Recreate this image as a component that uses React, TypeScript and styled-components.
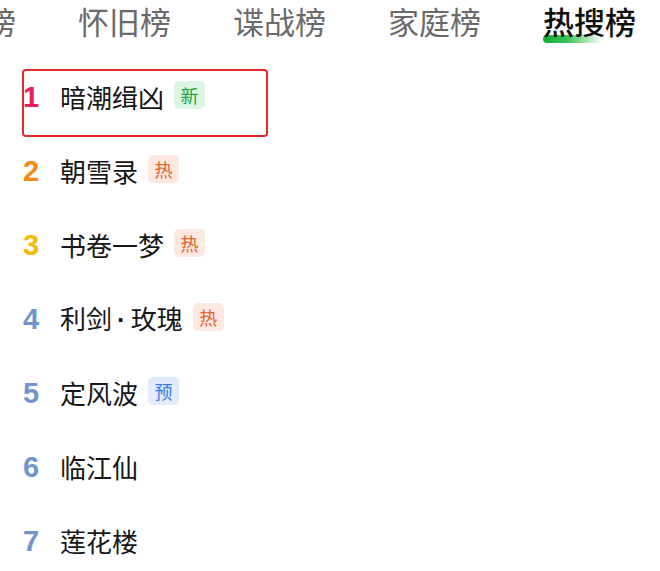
import React from 'react';
import styled, { createGlobalStyle } from 'styled-components';

const GlobalStyle = createGlobalStyle`
    html, body {
        margin: 0;
        padding: 0;
        background: #ffffff;
        overflow: hidden;
    }
    body {
        font-family: 'Noto Sans CJK SC', 'Noto Sans', sans-serif;
    }
`;

type TagKind = 'new' | 'hot' | 'pre';

const tagColors: Record<TagKind, { bg: string; fg: string; text: string }> = {
    new: { bg: '#dcf5e2', fg: '#18a64a', text: '新' },
    hot: { bg: '#fde8e1', fg: '#e2612c', text: '热' },
    pre: { bg: '#e1ebfb', fg: '#3b7be2', text: '预' },
};

const rankColors = ['#f0195b', '#f28a17', '#f7b705'];

// a name may hold a middle dot, drawn narrow as in the app
const shows: { name: string[]; tag?: TagKind }[] = [
    { name: ['暗潮缉凶'], tag: 'new' },
    { name: ['朝雪录'], tag: 'hot' },
    { name: ['书卷一梦'], tag: 'hot' },
    { name: ['利剑', '玫瑰'], tag: 'hot' },
    { name: ['定风波'], tag: 'pre' },
    { name: ['临江仙'] },
    { name: ['莲花楼'] },
];

const tabs = ['热播榜', '怀旧榜', '谍战榜', '家庭榜', '热搜榜'];

const Page = styled.div`
    width: 660px;
    height: 571px;
    overflow: hidden;
    background: #fff;
`;

const TabBar = styled.div`
    display: flex;
    gap: 62px;
    margin-left: -77px;
    height: 58px;
    white-space: nowrap;
`;

const Tab = styled.div<{ $active?: boolean }>`
    position: relative;
    flex-shrink: 0;
    font-size: 31px;
    line-height: 42px;
    color: ${(p) => (p.$active ? '#111111' : '#6a6a6a')};
    font-weight: ${(p) => (p.$active ? 500 : 400)};
    z-index: 0;
`;

const Underline = styled.span`
    position: absolute;
    left: 0;
    top: 35px;
    width: 60px;
    height: 8px;
    border-radius: 5px 2px 5px 5px;
    background: linear-gradient(90deg, #0fae33 0%, #3cc25a 40%, rgba(120, 215, 140, 0) 100%);
    z-index: -1;
`;

const List = styled.div`
    display: flex;
    flex-direction: column;
    margin-top: 2px;
`;

const Row = styled.div`
    position: relative;
    display: flex;
    align-items: center;
    height: 74px;
    padding-left: 23px;
`;

const Highlight = styled.div`
    position: absolute;
    left: 22px;
    top: 9px;
    width: 242px;
    height: 64px;
    border: 2px solid #e8282b;
    border-radius: 4px;
`;

const Rank = styled.span<{ $color: string }>`
    width: 37px;
    font-family: 'Liberation Sans', Arial, sans-serif;
    font-weight: 700;
    font-size: 29px;
    line-height: 1;
    color: ${(p) => p.$color};
`;

const Name = styled.span`
    font-size: 26px;
    color: #161616;
    line-height: 1;
`;

const Dot = styled.span`
    font-family: 'Liberation Sans', Arial, sans-serif;
    font-weight: 700;
    margin: 0 5px;
`;

const Tag = styled.span<{ $bg: string; $fg: string }>`
    display: inline-flex;
    align-items: center;
    justify-content: center;
    width: 31px;
    height: 28px;
    margin-left: 10px;
    margin-bottom: 5px;
    border-radius: 5px;
    background: ${(p) => p.$bg};
    color: ${(p) => p.$fg};
    font-size: 18px;
    line-height: 1;
`;

export default function App() {
    return (
        <Page>
            <GlobalStyle />
            <TabBar>
                {tabs.map((t, i) => (
                    <Tab key={t} $active={i === tabs.length - 1}>
                        {i === tabs.length - 1 && <Underline />}
                        {t}
                    </Tab>
                ))}
            </TabBar>
            <List>
                {shows.map((s, i) => {
                    const tag = s.tag ? tagColors[s.tag] : null;
                    return (
                        <Row key={s.name.join()}>
                            {i === 0 && <Highlight />}
                            <Rank $color={rankColors[i] ?? '#6f95cc'}>{i + 1}</Rank>
                            <Name>
                                {s.name.map((part, j) => (
                                    <React.Fragment key={part}>
                                        {j > 0 && <Dot>·</Dot>}
                                        {part}
                                    </React.Fragment>
                                ))}
                            </Name>
                            {tag && (
                                <Tag $bg={tag.bg} $fg={tag.fg}>
                                    {tag.text}
                                </Tag>
                            )}
                        </Row>
                    );
                })}
            </List>
        </Page>
    );
}
